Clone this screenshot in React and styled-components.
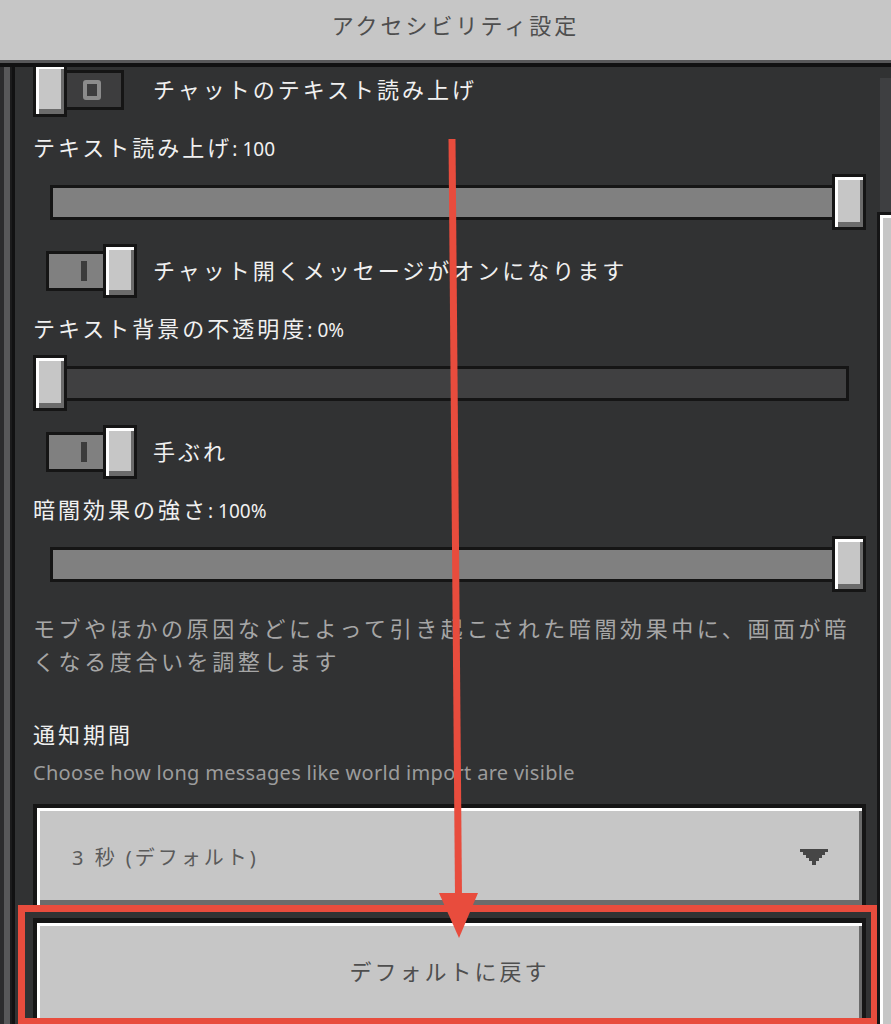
import React from 'react'
import styled, { createGlobalStyle, css } from 'styled-components'

const GlobalStyle = createGlobalStyle`
  html, body {
    margin: 0;
    padding: 0;
    background: #313233;
    overflow: hidden;
  }
  body {
    font-family: 'Noto Sans', 'Noto Sans CJK JP', sans-serif;
  }
`

const Screen = styled.div`
  position: relative;
  width: 891px;
  height: 1024px;
  display: flex;
  flex-direction: column;
  overflow: hidden;
`

const Header = styled.header`
  box-sizing: border-box;
  height: 63px;
  flex-shrink: 0;
  background: #c6c6c6;
  border-bottom: 3px solid #58585a;
  display: flex;
  align-items: center;
  justify-content: center;
  padding: 0 0 12px 20px;
`

const Title = styled.h1`
  margin: 0;
  font-size: 22px;
  font-weight: 400;
  letter-spacing: 3px;
  color: #4e4e4e;
`

const Body = styled.div`
  flex: 1;
  min-height: 0;
  display: flex;
  border-top: 4px solid #111112;
`

const LeftStrip = styled.div`
  box-sizing: border-box;
  width: 12px;
  flex-shrink: 0;
  background: #58585a;
  border-left: 4px solid #2c2c2e;
  border-right: 2px solid #1b1b1c;
`

const Panel = styled.main`
  flex: 1;
  min-width: 0;
  background: #313233;
  border-left: 3px solid #111112;
  padding: 0 11px 0 18px;
  overflow: hidden;
`

const Content = styled.div`
  margin-top: -4px;
`

const Scrollbar = styled.div`
  width: 14px;
  flex-shrink: 0;
  display: flex;
  flex-direction: column;
  padding-top: 11px;
  background: #313233;
`

const ScrollTrack = styled.div`
  height: 134px;
  margin-left: 3px;
  background: #3e3f41;
`

const ScrollThumb = styled.div`
  flex: 1;
  background: #c6c6c6;
  border-left: 3px solid #151516;
  border-top: 3px solid #151516;
  box-shadow: inset 3px 3px 0 #ffffff;
`

const bevel = css`
  box-sizing: border-box;
  border: 3px solid #151515;
  background: #c6c6c6;
  box-shadow: inset 3px 3px 0 #ffffff, inset -3px -5px 0 #6b6b6b;
`

const ToggleRow = styled.div`
  display: flex;
  align-items: center;
  gap: 16px;
  height: 54px;
  margin-bottom: 14px;
`

const Switch = styled.div`
  width: 104px;
  flex-shrink: 0;
  display: flex;
  align-items: center;
  justify-content: ${p => (p.$on ? 'flex-end' : 'flex-start')};
`

const SwitchTrack = styled.div`
  box-sizing: border-box;
  width: 62px;
  height: 40px;
  border: 3px solid #151515;
  background: ${p => (p.$on ? '#808080' : '#3d3d3e')};
  display: flex;
  align-items: center;
  padding-left: ${p => (p.$on ? '32px' : '18px')};
`

const SwitchKnob = styled.div`
  ${bevel}
  position: relative;
  z-index: 1;
  width: 34px;
  height: 54px;
  margin: ${p => (p.$on ? '0 0 0 -5px' : '0 -5px 0 0')};
`

const OnMark = styled.span`
  width: 6px;
  height: 20px;
  background: #3c3c3c;
`

const OffMark = styled.span`
  box-sizing: border-box;
  width: 18px;
  height: 20px;
  border: 4px solid #8c8c8c;
  border-radius: 3px;
`

const RowText = styled.span`
  padding-bottom: 5px;
  font-size: 22px;
  letter-spacing: 3px;
  color: #f0f0f0;
  white-space: nowrap;
`

const SettingLabel = styled.div`
  height: 34px;
  font-size: 22px;
  line-height: 33px;
  letter-spacing: 3px;
  color: #f0f0f0;
  margin-bottom: 9px;
  white-space: nowrap;
`

const Value = styled.span`
  font-size: 19px;
  line-height: 1;
  letter-spacing: 0;
`

const SliderBox = styled.div`
  position: relative;
  height: 56px;
  display: flex;
  align-items: center;
  margin-bottom: 14px;
`

const SliderTrack = styled.div`
  box-sizing: border-box;
  flex: 1;
  margin: 0 17px;
  height: 35px;
  border: 3px solid #151515;
  background: #404041;
  display: flex;
`

const SliderFill = styled.div`
  height: 100%;
  background: #808080;
`

const SliderThumb = styled.div`
  ${bevel}
  position: absolute;
  top: 0;
  width: 34px;
  height: 56px;
`

const Description = styled.p`
  margin: 20px 0 0;
  font-size: 22px;
  line-height: 33px;
  letter-spacing: 3.6px;
  color: #a6a6a6;
  white-space: nowrap;
`

const SectionTitle = styled.h2`
  margin: 39px 0 0;
  font-size: 22px;
  font-weight: 400;
  line-height: 34px;
  letter-spacing: 3px;
  color: #f0f0f0;
`

const Hint = styled.p`
  margin: 9px 0 0;
  font-size: 20px;
  line-height: 26px;
  letter-spacing: 0.3px;
  color: #9c9c9c;
  white-space: nowrap;
`

const Dropdown = styled.div`
  ${bevel}
  margin-top: 18px;
  height: 101px;
  border-width: 4px 4px 0 4px;
  display: flex;
  align-items: center;
  justify-content: space-between;
  padding: 0 34px 0 35px;
  font-size: 20px;
  letter-spacing: 3px;
  color: #5a5a5a;
`

const ResetArea = styled.div`
  position: relative;
  margin-top: 13px;
`

const ResetButton = styled.button`
  ${bevel}
  display: flex;
  align-items: center;
  justify-content: center;
  width: 100%;
  height: 106px;
  border-width: 5px 4px 0 4px;
  padding: 0 0 8px;
  font-family: inherit;
  font-size: 22px;
  letter-spacing: 3px;
  color: #4e4e4e;
  cursor: pointer;
`

const Highlight = styled.span`
  position: absolute;
  top: -13px;
  left: -15px;
  right: -12px;
  height: 120px;
  border: 7px solid #e84c3d;
  box-sizing: border-box;
  pointer-events: none;
`

const Annotation = styled.svg`
  position: absolute;
  top: 0;
  left: 0;
  z-index: 10;
  pointer-events: none;
`

function Toggle({ on, children }) {
  const track = (
    <SwitchTrack $on={on}>{on ? <OnMark /> : <OffMark />}</SwitchTrack>
  )
  return (
    <ToggleRow>
      <Switch $on={on}>
        {on ? track : null}
        <SwitchKnob $on={on} />
        {on ? null : track}
      </Switch>
      <RowText>{children}</RowText>
    </ToggleRow>
  )
}

function Slider({ label, unit, value }) {
  return (
    <>
      <SettingLabel>
        {label}
        <Value>: {value}{unit}</Value>
      </SettingLabel>
      <SliderBox>
        <SliderTrack>
          <SliderFill style={{ width: `${value}%` }} />
        </SliderTrack>
        <SliderThumb style={{ left: `calc((100% - 34px) * ${value / 100})` }} />
      </SliderBox>
    </>
  )
}

function Caret() {
  return (
    <svg width="28" height="16" viewBox="0 0 28 16">
      <g fill="#464646">
        <rect x="0" y="0" width="28" height="3" />
        <rect x="3" y="3" width="22" height="3" />
        <rect x="6" y="6" width="16" height="3" />
        <rect x="9" y="9" width="10" height="3" />
        <rect x="12" y="12" width="4" height="4" />
      </g>
    </svg>
  )
}

export default function App() {
  return (
    <Screen>
      <GlobalStyle />
      <Header>
        <Title>アクセシビリティ設定</Title>
      </Header>
      <Body>
        <LeftStrip />
        <Panel>
          <Content>
            <Toggle on={false}>チャットのテキスト読み上げ</Toggle>
            <Slider label="テキスト読み上げ" unit="" value={100} />
            <Toggle on>チャット開くメッセージがオンになります</Toggle>
            <Slider label="テキスト背景の不透明度" unit="%" value={0} />
            <Toggle on>手ぶれ</Toggle>
            <Slider label="暗闇効果の強さ" unit="%" value={100} />
            <Description>
              モブやほかの原因などによって引き起こされた暗闇効果中に、画面が暗
              <br />
              くなる度合いを調整します
            </Description>
            <SectionTitle>通知期間</SectionTitle>
            <Hint>Choose how long messages like world import are visible</Hint>
            <Dropdown>
              <span>3 秒 (デフォルト)</span>
              <Caret />
            </Dropdown>
            <ResetArea>
              <ResetButton type="button">デフォルトに戻す</ResetButton>
              <Highlight />
            </ResetArea>
          </Content>
        </Panel>
        <Scrollbar>
          <ScrollTrack />
          <ScrollThumb />
        </Scrollbar>
      </Body>
      <Annotation width="891" height="1024" viewBox="0 0 891 1024">
        <line x1="452" y1="139" x2="458.5" y2="896" stroke="#e84c3d" strokeWidth="7" />
        <polygon points="439,893 478,893 459,938" fill="#e84c3d" />
      </Annotation>
    </Screen>
  )
}
